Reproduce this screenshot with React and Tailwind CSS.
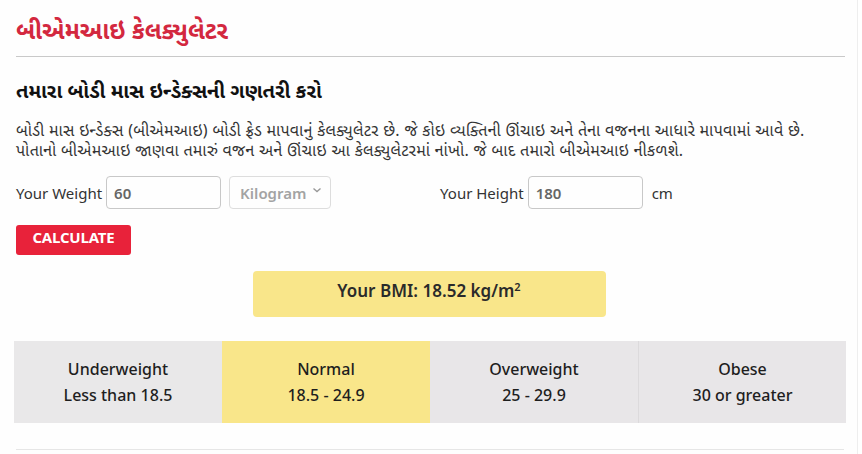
import { useState } from "react";

const ranges = [
    { name: "Underweight", value: "Less than 18.5", bg: "bg-[#e9e8e9]" },
    { name: "Normal", value: "18.5 - 24.9", bg: "bg-[#f9e68a]" },
    { name: "Overweight", value: "25 - 29.9", bg: "bg-[#e8e6e8]" },
    { name: "Obese", value: "30 or greater", bg: "bg-[#e8e6e8]" },
];

export default function App() {
    const [weight, setWeight] = useState("60");
    const [height, setHeight] = useState("180");

    return (
        <div
            className="w-[858px] h-[454px] bg-[#fefefe] border-r border-[#eeeeee] overflow-hidden text-[#222]"
            style={{ fontFamily: '"Noto Sans Gujarati", "Open Sans", "Noto Sans", sans-serif' }}
        >
            <div className="pl-4 pr-3 pt-[16px]">
                <h1 className="text-[24px] font-bold text-[#d3283f] leading-[34px] pb-[6px] border-b border-[#c9c9c9]">
                    બીએમઆઇ કેલક્યુલેટર
                </h1>

                <h2 className="mt-[22px] text-[20px] font-bold text-[#111] leading-[28px]">
                    તમારા બોડી માસ ઇન્ડેક્સની ગણતરી કરો
                </h2>
                <p className="mt-[16px] text-[16px] tracking-[0.3px] leading-[20px] text-[#333] whitespace-nowrap">
                    બોડી માસ ઇન્ડેક્સ (બીએમઆઇ) બોડી ફ્રેડ માપવાનું કેલક્યુલેટર છે. જે કોઇ વ્યક્તિની ઊંચાઇ અને તેના વજનના આધારે માપવામાં આવે છે.
                    <br />
                    પોતાનો બીએમઆઇ જાણવા તમારું વજન અને ઊંચાઇ આ કેલક્યુલેટરમાં નાંખો. જે બાદ તમારો બીએમઆઇ નીકળશે.
                </p>

                <div className="mt-[13px] flex items-center text-[15px] text-[#333]">
                    <label className="flex items-center">
                        <span className="mr-[4px] mt-[7px]">Your Weight</span>
                        <input
                            value={weight}
                            onChange={(e) => setWeight(e.target.value)}
                            className="w-[115px] h-[33px] px-[7px] pt-[6px] border border-[#c8c8c8] rounded-[4px] text-[15px] font-semibold text-[#666] outline-none"
                        />
                    </label>
                    <div className="ml-[8px] w-[102px] h-[33px] border border-[#dddddd] rounded-[4px] flex items-center justify-between pl-[10px] pr-[8px] text-[#a3a3a3] font-semibold">
                        <span className="mt-[7px]">Kilogram</span>
                        <svg width="10" height="10" viewBox="0 0 10 10" className="-mt-[6px]">
                            <path d="M1.5 3.5 L5 6.5 L8.5 3.5" fill="none" stroke="#999" strokeWidth="1.4" />
                        </svg>
                    </div>
                    <label className="flex items-center ml-[109px]">
                        <span className="mr-[4px] mt-[7px]">Your Height</span>
                        <input
                            value={height}
                            onChange={(e) => setHeight(e.target.value)}
                            className="w-[115px] h-[33px] px-[7px] pt-[6px] border border-[#c8c8c8] rounded-[4px] text-[15px] font-semibold text-[#666] outline-none"
                        />
                    </label>
                    <span className="ml-[9px] mt-[7px]">cm</span>
                </div>

                <button className="mt-[16px] w-[115px] h-[30px] bg-[#e8223a] text-white text-[15px] font-bold rounded-[3px] tracking-[-0.2px]">
                    CALCULATE
                </button>

                <div className="mt-[16px] flex justify-center pr-[3px]">
                    <div className="w-[353px] h-[46px] bg-[#f9e68a] rounded-[4px] flex items-center justify-center text-[17px] font-semibold text-[#2a2a2a]">
                        Your BMI: 18.52 kg/m<sup className="text-[11px] -mt-[2px]">2</sup>
                    </div>
                </div>
            </div>

            <div className="mt-[24px] ml-[14px] w-[832px] grid grid-cols-4 h-[82px]">
                {ranges.map((r, i) => (
                    <div
                        key={r.name}
                        className={`${r.bg} flex flex-col items-center justify-center pt-[6px] text-[16px] font-medium text-[#1e1e1e] leading-[26px] ${i === 3 ? "border-l border-[#dcdadc]" : ""}`}
                    >
                        <div>{r.name}</div>
                        <div>{r.value}</div>
                    </div>
                ))}
            </div>

            <div className="mt-[26px] ml-[16px] w-[828px] border-b border-[#e6e6e6]"></div>
        </div>
    );
}
